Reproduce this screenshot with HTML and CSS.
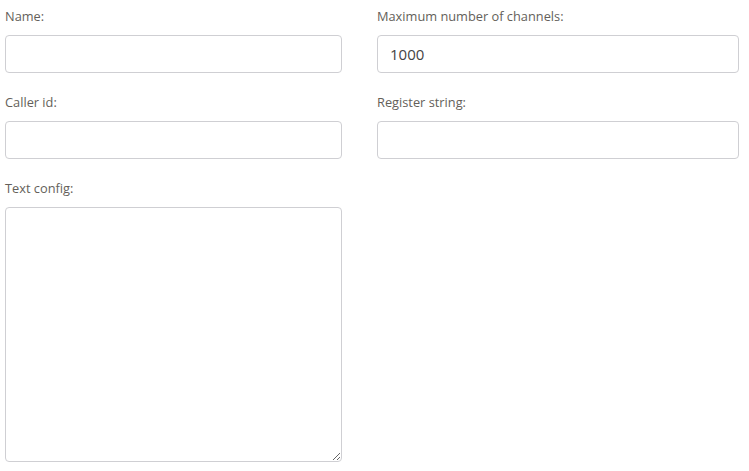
FILE: index.html
```html
<!DOCTYPE html>
<html>
<head>
<meta charset="utf-8">
<link rel="stylesheet" href="styles.css">
</head>
<body>
<form class="form">
  <div class="field">
    <label class="label">Name:</label>
    <input class="input" type="text">
  </div>
  <div class="field">
    <label class="label">Maximum number of channels:</label>
    <input class="input" type="text" value="1000">
  </div>
  <div class="field">
    <label class="label">Caller id:</label>
    <input class="input" type="text">
  </div>
  <div class="field">
    <label class="label">Register string:</label>
    <input class="input" type="text">
  </div>
  <div class="field">
    <label class="label">Text config:</label>
    <textarea class="textarea"></textarea>
  </div>
</form>
</body>
</html>
```
FILE: styles.css
```css
html, body {
  margin: 0;
  padding: 0;
  background: #fff;
}
.form {
  display: grid;
  grid-template-columns: 337px 362px;
  column-gap: 35px;
  row-gap: 20px;
  padding: 7px 0 0 5px;
  font-family: "Open Sans", "Liberation Sans", sans-serif;
}
.field {
  display: flex;
  flex-direction: column;
}
.label {
  font-size: 12.8px;
  line-height: 18px;
  color: #645f5a;
  margin-bottom: 10px;
}
.input, .textarea {
  box-sizing: border-box;
  width: 100%;
  border: 1px solid #cfcfd3;
  border-radius: 4px;
  background: #fff;
  font-family: "Open Sans", "Liberation Sans", sans-serif;
  font-size: 15px;
  color: #444;
  padding: 0 12px;
  margin: 0;
  outline: none;
}
.input {
  height: 38px;
}
.textarea {
  height: 255px;
  resize: vertical;
}
```
